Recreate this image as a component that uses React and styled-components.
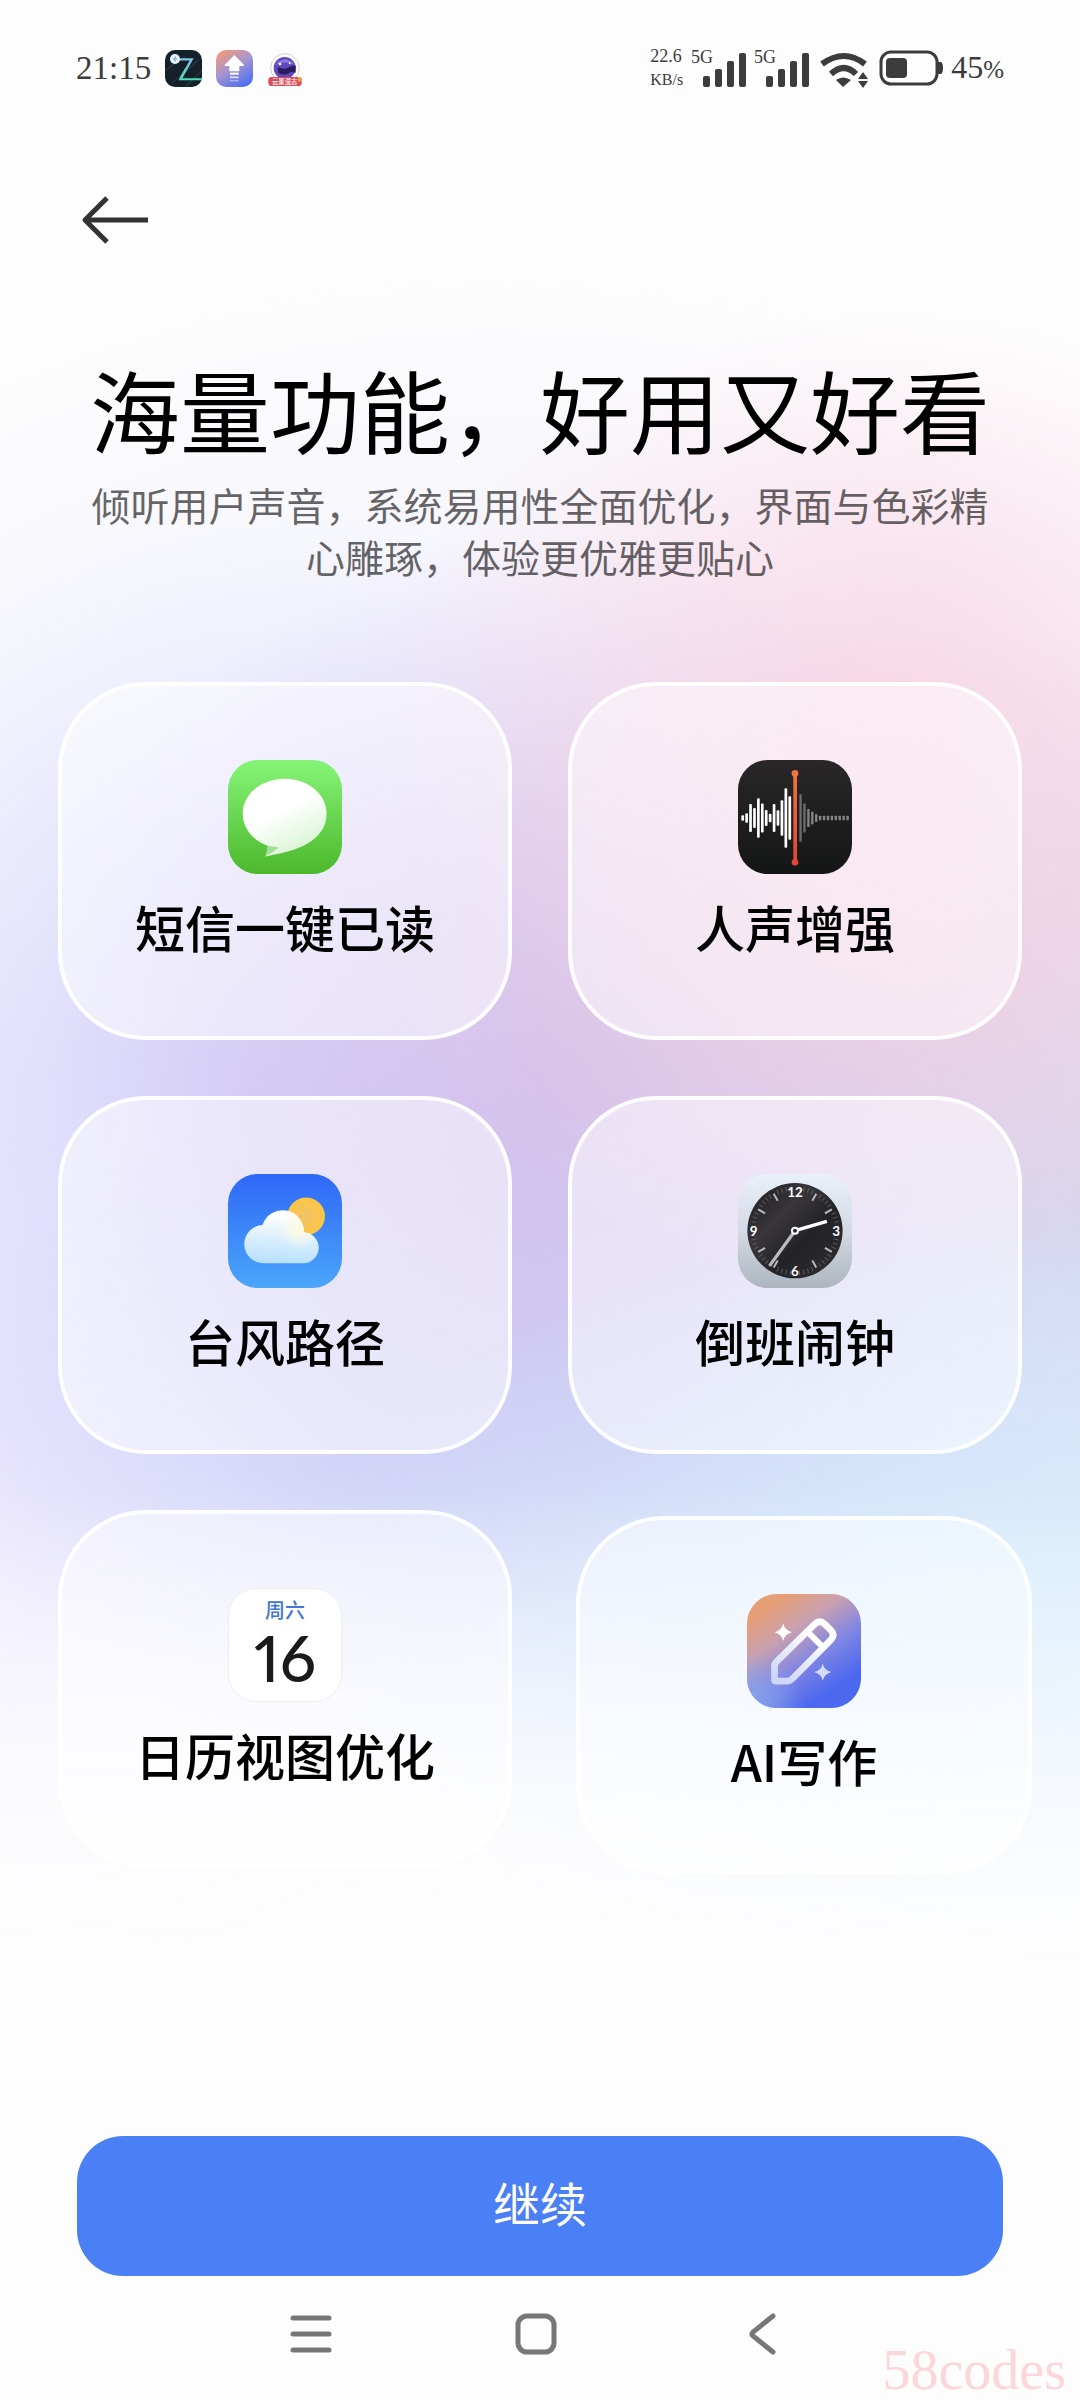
import styled, {createGlobalStyle} from "styled-components";

const GlobalStyle = createGlobalStyle`
    * {
        box-sizing: border-box;
    }

    body {
        margin: 0;
        background: #fdfdfd;
        font-family: "Noto Sans CJK SC", sans-serif;
        color: #000;
    }

    button {
        border: 0;
        padding: 0;
        background: none;
        font: inherit;
        cursor: pointer;
    }

    svg {
        display: block;
    }
`;

const Page = styled.div`
    min-height: 100vh;
    display: flex;
    flex-direction: column;
    background:
        linear-gradient(to bottom, rgba(253, 253, 254, 0) 62%, rgba(253, 253, 254, 0.45) 70%, rgba(253, 253, 254, 0.85) 78%, #fdfdfe 86%),
        radial-gradient(ellipse 46% 16% at 82% 29%, rgba(249, 208, 224, 0.75) 0%, rgba(250, 210, 225, 0.5) 40%, rgba(252, 212, 226, 0.2) 75%, rgba(252, 212, 226, 0) 100%),
        radial-gradient(ellipse 50% 14% at 84% 40%, rgba(236, 204, 224, 0.85) 0%, rgba(236, 204, 224, 0.5) 45%, rgba(236, 204, 224, 0) 100%),
        radial-gradient(ellipse 70% 16% at 96% 67%, rgba(216, 238, 253, 0.95) 0%, rgba(214, 234, 252, 0.65) 45%, rgba(212, 232, 250, 0) 100%),
        radial-gradient(ellipse 48% 23% at 52% 45%, rgba(207, 184, 232, 0.8) 0%, rgba(207, 186, 234, 0.55) 40%, rgba(207, 190, 236, 0.2) 78%, rgba(207, 190, 236, 0) 100%),
        radial-gradient(ellipse 64% 17% at 58% 59%, rgba(200, 208, 247, 0.9) 0%, rgba(200, 208, 247, 0.6) 45%, rgba(200, 208, 247, 0) 100%),
        radial-gradient(ellipse 50% 24% at 104% 50%, rgba(212, 212, 236, 0.9) 0%, rgba(216, 216, 238, 0.5) 50%, rgba(216, 216, 238, 0) 100%),
        radial-gradient(ellipse 52% 25% at 24% 46%, rgba(210, 208, 250, 0.8) 0%, rgba(216, 216, 252, 0.55) 45%, rgba(226, 228, 255, 0.2) 80%, rgba(228, 230, 255, 0) 100%),
        radial-gradient(ellipse 60% 22% at 0% 60%, rgba(236, 228, 254, 0.85) 0%, rgba(236, 230, 254, 0.5) 50%, rgba(236, 230, 254, 0) 100%),
        radial-gradient(ellipse 100% 36% at 46% 47%, rgba(232, 230, 252, 0.9) 0%, rgba(236, 236, 253, 0.55) 55%, rgba(240, 240, 253, 0) 100%),
        #fdfdfd;
`;

const StatusBar = styled.div`
    height: 136px;
    padding: 0 76px 0 76px;
    display: flex;
    align-items: center;
    justify-content: space-between;
    font-family: "Liberation Serif", serif;
    color: #3c3c3c;
`;

const StatusGroup = styled.div`
    display: flex;
    align-items: center;
    gap: ${({$gap}) => $gap}px;
`;

const Time = styled.time`
    font-size: 33px;
    line-height: 40px;
`;

const Speed = styled.div`
    font-size: 18px;
    line-height: 24px;

    & > div:last-child {
        font-size: 16px;
    }
`;

const Battery = styled.div`
    font-size: 32px;
    line-height: 40px;

    & > small {
        font-size: 25px;
    }
`;

const Header = styled.header`
    padding: 40px 72px 0;
`;

const BackButton = styled.button`
    display: flex;
    align-items: center;
    width: 88px;
    height: 88px;
    padding-left: 8px;
`;

const Intro = styled.section`
    padding: 84px 72px 0;
    text-align: center;
`;

const Title = styled.h1`
    margin: 0;
    font-size: 90px;
    line-height: 120px;
    font-weight: 400;
`;

const SubTitle = styled.p`
    max-width: 920px;
    margin: 10px auto 0;
    font-size: 39px;
    line-height: 52px;
    color: rgba(0, 0, 0, 0.6);
`;

const CardGrid = styled.ul`
    list-style: none;
    margin: 100px 0 0;
    padding: 0 58px;
    display: grid;
    grid-template-columns: 1fr 1fr;
    gap: 56px;
`;

const Card = styled.li`
    min-height: 358px;
    padding-top: 74px;
    border: 4px solid rgba(255, 255, 255, 0.9);
    border-radius: 88px;
    background: rgba(255, 255, 255, 0.5);
    display: flex;
    flex-direction: column;
    align-items: center;
    gap: 16px;
    margin: ${({$settling}) => ($settling ? '6px -10px -6px 8px' : '0')};
`;

const CardName = styled.div`
    font-size: 50px;
    line-height: 72px;
    font-weight: 500;
`;

const CalendarIcon = styled.div`
    width: 114px;
    height: 114px;
    padding-top: 8px;
    border: 1px solid #ececf2;
    border-radius: 28px;
    background: #fff;
    text-align: center;
    font-family: Lato, "Noto Sans CJK SC", sans-serif;

    & > .weekday {
        font-size: 20px;
        line-height: 26px;
        font-weight: 500;
        color: #4077d6;
    }

    & > .date {
        font-variant-numeric: proportional-nums;
        font-size: 64px;
        line-height: 70px;
        font-weight: 500;
        color: #1a1a1a;
    }
`;

const Footer = styled.footer`
    margin-top: auto;
    padding: 0 77px;
`;

const ContinueButton = styled.button`
    width: 100%;
    height: 140px;
    padding-bottom: 8px;
    border-radius: 46px;
    background: #4a7ff5;
    color: #fff;
    font-size: 47px;
    line-height: 64px;
`;

const NavBar = styled.nav`
    height: 124px;
    padding: 0 205px 8px 198px;
    display: grid;
    grid-template-columns: repeat(3, 1fr);

    & > button {
        display: flex;
        align-items: center;
        justify-content: center;
    }
`;

const Watermark = styled.div`
    position: absolute;
    right: 14px;
    bottom: 0;
    font-family: "Liberation Serif", serif;
    font-size: 56px;
    line-height: 60px;
    color: #fcd6d9;
    pointer-events: none;
`;

const ScreenWrap = styled.div`
    position: relative;
`;

function NotifyIcons() {
    return (
        <>
            <svg width="37" height="37" viewBox="0 0 111 111">
                <rect width="111" height="111" rx="30" fill="#14202a"/>
                <path d="M0 62L60 20M20 100L100 30M60 111L111 62" stroke="#26333d" strokeWidth="5"/>
                <path d="M36 28H80L46 88" fill="none" stroke="#7cc4e8" strokeWidth="7"/>
                <path d="M62 58L46 88H111" fill="none" stroke="#4be0b8" strokeWidth="6"/>
                <circle cx="30" cy="27" r="15" fill="#e8f4fb"/>
                <path d="M33 20L25 27L33 34M27 27H37" fill="none" stroke="#5b9bc6" strokeWidth="3"/>
            </svg>
            <svg width="37" height="37" viewBox="0 0 111 111">
                <defs>
                    <linearGradient id="upBg" x1="0.2" y1="0" x2="0.8" y2="1">
                        <stop offset="0" stopColor="#f0987c"/>
                        <stop offset="0.45" stopColor="#a796cf"/>
                        <stop offset="1" stopColor="#4a6cf4"/>
                    </linearGradient>
                </defs>
                <rect width="111" height="111" rx="30" fill="url(#upBg)"/>
                <path d="M55 18L82 46H68V62H42V46H28Z" fill="#fff" stroke="#fff" strokeWidth="4" strokeLinejoin="round"/>
                <path d="M42 71H68" stroke="#fff" strokeWidth="6"/>
                <path d="M42 82H68" stroke="#dfe4ff" strokeWidth="5"/>
                <path d="M42 92H68" stroke="#a9b6fb" strokeWidth="4"/>
            </svg>
            <svg width="37" height="37" viewBox="0 0 111 111">
                <circle cx="54" cy="54" r="43" fill="#fff" stroke="#d3cede" strokeWidth="3"/>
                <circle cx="53" cy="54" r="33" fill="#6148bd"/>
                <path d="M24 46Q52 10 82 44Q54 30 24 46Z" fill="#8c7bdc"/>
                <path d="M32 50Q52 62 68 50L86 46V68L72 66Q52 80 34 68Z" fill="#2a1d5c"/>
                <circle cx="39" cy="42" r="4" fill="#fff"/>
                <circle cx="68" cy="40" r="3" fill="#fff"/>
                <rect x="4" y="81" width="100" height="27" rx="10" fill="#d94c58"/>
                <path d="M92 81H96Q106 81 105 92L94 96Z" fill="#f0a24c"/>
                <text x="53" y="102" textAnchor="middle" fontFamily="Noto Sans CJK SC, sans-serif" fontSize="19"
                      fontWeight="500" fill="#fff">云景漫志</text>
            </svg>
        </>
    );
}

function SignalIcon() {
    return (
        <svg width="55" height="40" viewBox="0 0 55 40" fill="#3c3c3c">
            <text x="0" y="15" fontFamily="Liberation Serif, serif" fontSize="18">5G</text>
            <rect x="12" y="28" width="7" height="11" rx="2"/>
            <rect x="24" y="21" width="7" height="18" rx="2"/>
            <rect x="36" y="13" width="7" height="26" rx="2"/>
            <rect x="48" y="5" width="7" height="34" rx="2"/>
        </svg>
    );
}

function WifiIcon() {
    return (
        <svg width="54" height="40" viewBox="-4 0 54 40">
            <path d="M1 16Q23 0 44 16" fill="none" stroke="#3c3c3c" strokeWidth="6"/>
            <path d="M10 26Q23 14 35 26" fill="none" stroke="#3c3c3c" strokeWidth="6"/>
            <path d="M15 32Q22 27 30 32L22 39Z" fill="#3c3c3c"/>
            <path d="M42 24L47 31H37ZM42 40L47 33H37Z" fill="#3c3c3c"/>
        </svg>
    );
}

function BatteryIcon() {
    return (
        <svg width="64" height="36" viewBox="0 0 64 36">
            <rect x="2" y="2" width="56" height="32" rx="10" fill="none" stroke="#3c3c3c" strokeWidth="3"/>
            <rect x="7" y="8" width="21" height="20" rx="4" fill="#3c3c3c"/>
            <path d="M59 12H62Q64 13 64 18Q64 23 62 24H59Z" fill="#3c3c3c"/>
        </svg>
    );
}

function MessageIcon() {
    return (
        <svg width="114" height="114" viewBox="0 0 340 340">
            <defs>
                <linearGradient id="msgBg" x1="0" y1="0" x2="0" y2="1">
                    <stop offset="0" stopColor="#86f577"/>
                    <stop offset="1" stopColor="#4db82c"/>
                </linearGradient>
                <linearGradient id="msgBubble" x1="0.3" y1="0.2" x2="0.75" y2="1">
                    <stop offset="0.3" stopColor="#fff"/>
                    <stop offset="1" stopColor="#d3f3cb"/>
                </linearGradient>
            </defs>
            <rect width="340" height="340" rx="88" fill="url(#msgBg)"/>
            <path d="M169 56C238 56 294 101 294 160C294 200 270 230 236 250C206 268 160 279 111 288C115 280 118 270 119 256C76 241 44 204 44 160C44 101 100 56 169 56Z"
                  fill="url(#msgBubble)"/>
            <path d="M119 256L152 261Q134 276 111 288Q117 276 119 256Z" fill="#a5dd97"/>
        </svg>
    );
}

const playedBars = [16, 28, 84, 60, 118, 86, 48, 26, 84, 46, 106, 178, 130];
const restBars = [142, 86, 54, 38, 24, 14, 14, 14, 14, 14, 14, 14, 14];

function VoiceIcon() {
    return (
        <svg width="114" height="114" viewBox="0 0 340 340">
            <defs>
                <linearGradient id="voiceBg" x1="0" y1="0" x2="0" y2="1">
                    <stop offset="0" stopColor="#292728"/>
                    <stop offset="1" stopColor="#141615"/>
                </linearGradient>
                <linearGradient id="voiceLine" gradientUnits="userSpaceOnUse" x1="0" y1="40" x2="0" y2="305">
                    <stop offset="0" stopColor="#ef7440"/>
                    <stop offset="1" stopColor="#e04537"/>
                </linearGradient>
            </defs>
            <rect width="340" height="340" rx="88" fill="url(#voiceBg)"/>
            {playedBars.map((h, i) => (
                <rect key={i} x={10 + i * 11.7} y={173 - h / 2} width="8" height={h} rx="3" fill="#fff"/>
            ))}
            {restBars.map((h, i) => (
                <rect key={i} x={183 + i * 11.7} y={173 - h / 2} width="7" height={h} rx="2"
                      fill={i < 2 ? '#6d6d6d' : '#858585'}/>
            ))}
            <rect x="165" y="40" width="11" height="265" fill="url(#voiceLine)"/>
            <circle cx="170" cy="40" r="10" fill="#ef7440"/>
            <circle cx="170" cy="305" r="10" fill="#e04537"/>
        </svg>
    );
}

function WeatherIcon() {
    return (
        <svg width="114" height="114" viewBox="0 0 340 340">
            <defs>
                <linearGradient id="skyBg" x1="0" y1="0" x2="0" y2="1">
                    <stop offset="0" stopColor="#2e68f7"/>
                    <stop offset="1" stopColor="#4ba6fa"/>
                </linearGradient>
                <radialGradient id="sun">
                    <stop offset="0" stopColor="#f0c368"/>
                    <stop offset="1" stopColor="#fcc643"/>
                </radialGradient>
                <linearGradient id="cloud" x1="0.5" y1="0" x2="0.4" y2="1">
                    <stop offset="0.1" stopColor="#fff"/>
                    <stop offset="0.6" stopColor="#d6edfd"/>
                    <stop offset="1" stopColor="#b7e0fe"/>
                </linearGradient>
                <radialGradient id="glow" gradientUnits="userSpaceOnUse" cx="212" cy="165" r="60">
                    <stop offset="0" stopColor="#fffbe0"/>
                    <stop offset="1" stopColor="#fffbe0" stopOpacity="0"/>
                </radialGradient>
                <path id="cloudShape"
                      d="M108 266A57 57 0 0 1 103 152A63 63 0 0 1 226 174A46 46 0 0 1 223 266Z"/>
            </defs>
            <rect width="340" height="340" rx="88" fill="url(#skyBg)"/>
            <circle cx="233" cy="126" r="56" fill="url(#sun)"/>
            <use href="#cloudShape" fill="url(#cloud)"/>
            <use href="#cloudShape" fill="url(#glow)"/>
        </svg>
    );
}

function ClockIcon() {
    const ticks = Array.from({length: 60}, (_, i) => i);

    return (
        <svg width="114" height="114" viewBox="0 0 340 340">
            <defs>
                <linearGradient id="clockBg" x1="0" y1="0" x2="0" y2="1">
                    <stop offset="0" stopColor="#e9f0fa"/>
                    <stop offset="0.5" stopColor="#d3dae3"/>
                    <stop offset="1" stopColor="#adb5bf"/>
                </linearGradient>
                <linearGradient id="clockFace" x1="0" y1="0" x2="1" y2="1">
                    <stop offset="0" stopColor="#1d1c20"/>
                    <stop offset="0.35" stopColor="#38363a"/>
                    <stop offset="0.6" stopColor="#232226"/>
                    <stop offset="1" stopColor="#2f2e33"/>
                </linearGradient>
            </defs>
            <rect width="340" height="340" rx="88" fill="url(#clockBg)"/>
            <circle cx="170" cy="169" r="142" fill="url(#clockFace)"/>
            {ticks.filter((i) => i % 15 !== 0).map((i) => (
                <path key={i} d={i % 5 === 0 ? 'M170 42V66' : 'M170 36V50'}
                      stroke={i % 5 === 0 ? '#b9b9bb' : '#5c5c5f'}
                      strokeWidth={i % 5 === 0 ? 6 : 3}
                      transform={`rotate(${i * 6} 170 169)`}/>
            ))}
            <g fontFamily="Lato, sans-serif" fontSize="40" fontWeight="700" fill="#fff" textAnchor="middle">
                <text x="170" y="68">12</text>
                <text x="293" y="186">3</text>
                <text x="170" y="304">6</text>
                <text x="47" y="186">9</text>
            </g>
            <path d="M170 169L94 274" stroke="#bdbab8" strokeWidth="10"/>
            <path d="M170 169L265 141" stroke="#fff" strokeWidth="10"/>
            <circle cx="170" cy="169" r="9" fill="#2a292d" stroke="#fff" strokeWidth="6"/>
        </svg>
    );
}

function WritingIcon() {
    return (
        <svg width="114" height="114" viewBox="0 0 340 340">
            <defs>
                <linearGradient id="aiBg" x1="0.15" y1="0" x2="0.8" y2="0.95">
                    <stop offset="0.1" stopColor="#e6a077"/>
                    <stop offset="0.35" stopColor="#c9a0b0"/>
                    <stop offset="0.6" stopColor="#8387e2"/>
                    <stop offset="0.9" stopColor="#4b68ef"/>
                </linearGradient>
                <radialGradient id="aiCorner" cx="0" cy="1" r="0.5">
                    <stop offset="0" stopColor="#88a6ee"/>
                    <stop offset="1" stopColor="#88a6ee" stopOpacity="0"/>
                </radialGradient>
                <linearGradient id="pen" gradientUnits="userSpaceOnUse" x1="220" y1="80" x2="120" y2="270">
                    <stop offset="0.2" stopColor="#fff"/>
                    <stop offset="1" stopColor="#ced6fa"/>
                </linearGradient>
            </defs>
            <rect width="340" height="340" rx="88" fill="url(#aiBg)"/>
            <rect width="340" height="340" rx="88" fill="url(#aiCorner)"/>
            <path d="M82 254V216Q82 208 88 202L202 90Q217 76 232 90L250 108Q264 122 250 137L136 252Q128 260 120 260H88Q82 260 82 254Z"
                  fill="none" stroke="url(#pen)" strokeWidth="20" strokeLinejoin="round"/>
            <path d="M180 112L228 160" stroke="#fff" strokeWidth="18"/>
            <path d="M108 88Q113 109 134 114Q113 119 108 140Q103 119 82 114Q103 109 108 88Z" fill="#fff"/>
            <path d="M226 208Q231 229 252 233Q231 238 226 258Q221 238 200 233Q221 229 226 208Z" fill="#d5dbfb"/>
        </svg>
    );
}

function Calendar() {
    return (
        <CalendarIcon>
            <div className="weekday">周六</div>
            <div className="date">16</div>
        </CalendarIcon>
    );
}

const features = [
    {name: '短信一键已读', Icon: MessageIcon},
    {name: '人声增强', Icon: VoiceIcon},
    {name: '台风路径', Icon: WeatherIcon},
    {name: '倒班闹钟', Icon: ClockIcon},
    {name: '日历视图优化', Icon: Calendar},
    {name: 'AI写作', Icon: WritingIcon, settling: true},
];

function App() {
    return (
        <ScreenWrap>
            <GlobalStyle/>
            <Page>
                <StatusBar>
                    <StatusGroup $gap={14}>
                        <Time>21:15</Time>
                        <NotifyIcons/>
                    </StatusGroup>
                    <StatusGroup $gap={8}>
                        <Speed>
                            <div>22.6</div>
                            <div>KB/s</div>
                        </Speed>
                        <SignalIcon/>
                        <SignalIcon/>
                        <WifiIcon/>
                        <BatteryIcon/>
                        <Battery>45<small>%</small></Battery>
                    </StatusGroup>
                </StatusBar>

                <Header>
                    <BackButton aria-label="返回">
                        <svg width="70" height="52" viewBox="0 0 70 52" fill="none" stroke="#333" strokeWidth="5">
                            <path d="M68 26H5M27 4L5 26L27 48" strokeLinejoin="round"/>
                        </svg>
                    </BackButton>
                </Header>

                <Intro>
                    <Title>海量功能，好用又好看</Title>
                    <SubTitle>倾听用户声音，系统易用性全面优化，界面与色彩精心雕琢，体验更优雅更贴心</SubTitle>
                </Intro>

                <CardGrid>
                    {features.map(({name, Icon, settling}) => (
                        <Card key={name} $settling={settling}>
                            <Icon/>
                            <CardName>{name}</CardName>
                        </Card>
                    ))}
                </CardGrid>

                <Footer>
                    <ContinueButton>继续</ContinueButton>
                </Footer>
                <NavBar>
                    <button aria-label="最近任务">
                        <svg width="42" height="42" viewBox="0 0 42 42" stroke="#777" strokeWidth="5" strokeLinecap="round">
                            <path d="M3 5H39M3 21H39M3 37H39"/>
                        </svg>
                    </button>
                    <button aria-label="主屏幕">
                        <svg width="42" height="42" viewBox="0 0 42 42">
                            <rect x="3" y="3" width="36" height="36" rx="9" fill="none" stroke="#777" strokeWidth="5"/>
                        </svg>
                    </button>
                    <button aria-label="返回上一页">
                        <svg width="28" height="42" viewBox="0 0 28 42">
                            <path d="M25 3L5 19Q3 21 5 23L25 39" fill="none" stroke="#777" strokeWidth="5"
                                  strokeLinecap="round"/>
                        </svg>
                    </button>
                </NavBar>
            </Page>
            <Watermark>58codes</Watermark>
        </ScreenWrap>
    );
}

export default App;
